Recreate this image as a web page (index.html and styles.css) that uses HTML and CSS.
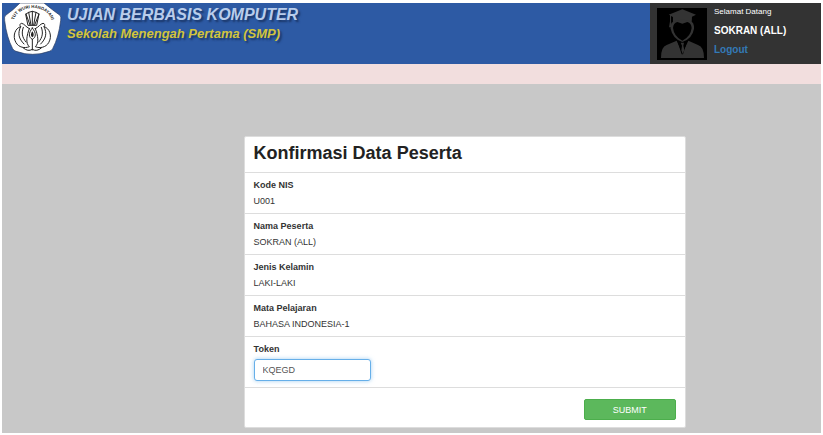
FILE: index.html
```html
<!DOCTYPE html>
<html lang="id">
<head>
  <meta charset="utf-8">
  <meta name="viewport" content="width=device-width, initial-scale=1">
  <title>Konfirmasi Data Peserta</title>
  <link rel="stylesheet" href="styles.css">
</head>
<body>
  <header class="header">
    <svg class="logo" viewBox="6 9 180 159" aria-hidden="true">
      <path d="M60 9 L132 9 Q160 32 180 46 Q184 50 182 62 Q176 112 158 146 Q155 152 148 154 Q98 172 48 154 Q42 152 38 146 Q20 112 14 62 Q12 50 17 46 Q40 30 60 9 Z" fill="#fff" stroke="#24365c" stroke-width="2"/>
      <path id="lengkung" d="M41 82 C30 5 166 5 155 82" fill="none"/>
      <text class="logo-text" text-anchor="middle"><textPath href="#lengkung" startOffset="50%">TUT WURI HANDAYANI</textPath></text>
      <g fill="none" stroke="#222" stroke-width="3" stroke-linecap="round" stroke-linejoin="round">
        <path d="M90 75 L78 42 M93 75 L86 37 M97 75 L97 34 M101 75 L108 37 M104 75 L117 42"/>
        <path d="M78 42 L86 37 L97 34 L108 37 L117 42 L110 76 L85 76 Z"/>
        <path d="M88 86 C76 80 74 72 65 70 C60 70 58 76 62 80 C46 84 36 108 48 128 C56 142 74 146 88 140 C76 130 80 106 88 86 Z"/>
        <path d="M106 86 C118 80 120 72 129 70 C134 70 136 76 132 80 C148 84 158 108 146 128 C138 142 120 146 106 140 C118 130 114 106 106 86 Z"/>
        <path d="M62 80 C52 100 56 116 72 132 M70 82 C64 98 66 112 78 126 M132 80 C142 100 138 116 122 132 M124 82 C130 98 128 112 116 126"/>
        <path d="M97 84 C84 100 86 112 97 118 C108 112 110 100 97 84 Z M97 118 L97 150 M70 144 Q84 156 97 148 Q110 156 124 144"/>
      </g>
      <path d="M97 94 C91 102 92 109 97 112 C102 109 103 102 97 94 Z" fill="#222"/>
    </svg>
    <div class="brand">
      <div class="brand-title">UJIAN BERBASIS KOMPUTER</div>
      <div class="brand-sub">Sekolah Menengah Pertama (SMP)</div>
    </div>
    <div class="user">
      <svg class="avatar" viewBox="0 0 150 156" aria-hidden="true">
        <rect width="150" height="156" fill="#000"/>
        <g fill="#333">
          <path d="M76 4 L117 20 L105 26 L104 44 Q76 29 48 44 L48 27 L42 24 L42 40 L45 58 L36 58 L39 40 L39 22 L35 20 Z"/>
          <path d="M47 42 Q76 28 105 42 Q112 48 111 62 Q106 92 76 102 Q47 92 41 62 Q40 48 47 42 Z"/>
          <path d="M12 150 Q12 116 29 111 L59 98 L76 136 L94 98 L123 111 Q141 116 141 150 Z"/>
        </g>
        <path d="M48 60 Q49 45 61 42 L76 47 L91 42 Q103 45 104 60 Q101 86 76 98 Q51 86 48 60 Z" fill="#000"/>
        <path d="M61 98 L76 105 L91 98 L78 139 L74 139 Z" fill="#000"/>
        <path d="M71 104 L81 104 L79 113 L82 126 L77 138 L73 127 L75 113 Z" fill="#333"/>
      </svg>
      <div class="user-info">
        <span>Selamat Datang</span>
        <strong>SOKRAN (ALL)</strong>
        <a href="#">Logout</a>
      </div>
    </div>
  </header>
  <div class="strip"></div>

  <main class="main">
    <form class="panel">
      <h1>Konfirmasi Data Peserta</h1>
      <dl>
        <div class="row">
          <dt>Kode NIS</dt>
          <dd>U001</dd>
        </div>
        <div class="row">
          <dt>Nama Peserta</dt>
          <dd>SOKRAN (ALL)</dd>
        </div>
        <div class="row">
          <dt>Jenis Kelamin</dt>
          <dd>LAKI-LAKI</dd>
        </div>
        <div class="row">
          <dt>Mata Pelajaran</dt>
          <dd>BAHASA INDONESIA-1</dd>
        </div>
      </dl>
      <div class="row">
        <label for="token">Token</label>
        <input type="text" id="token" value="KQEGD">
      </div>
      <div class="panel-footer">
        <button type="submit">SUBMIT</button>
      </div>
    </form>
  </main>
</body>
</html>
```

FILE: styles.css
```css
* {
  box-sizing: border-box;
}

body {
  display: flex;
  flex-direction: column;
  min-height: 100vh;
  margin: 0;
  padding: 3px 2px 2px;
  background: #fff;
  color: #333;
  font-family: "Liberation Sans", Arial, sans-serif;
  font-size: 9px;
  line-height: 16px;
}

.header {
  display: flex;
  background: #2d5aa4;
}

.logo {
  width: 60px;
  height: 53px;
}

.logo-text {
  fill: #222;
  font-size: 13px;
  font-weight: bold;
}

.brand {
  flex: 1;
  padding: 2px 0 0 5px;
  font-style: italic;
  font-weight: bold;
  text-shadow: 2px 2px 2px #1a3566;
  white-space: nowrap;
}

.brand-title {
  color: #b9cdeb;
  font-size: 16px;
  line-height: 20px;
}

.brand-sub {
  color: #d2c43c;
  font-size: 13px;
  line-height: 18px;
}

.user {
  display: flex;
  width: 171px;
  padding: 5px 7px 4px;
  background: #333;
}

.avatar {
  width: 50px;
  height: 52px;
}

.user-info {
  display: flex;
  flex-direction: column;
  padding-left: 7px;
  color: #fff;
  font-size: 8px;
  line-height: 8px;
}

.user-info strong,
.user-info a {
  font-size: 10px;
  font-weight: bold;
  line-height: 19px;
}

.user-info strong {
  padding-top: 5px;
}

.user-info a {
  color: #337ab7;
  text-decoration: none;
}

.strip {
  height: 20px;
  background: #f2dede;
}

.main {
  flex: 1;
  padding: 52px 0 5px;
  background: #c8c8c8;
}

.panel {
  width: 54%;
  margin-left: 29.5%;
  background: #fff;
  border: 1px solid #ddd;
  border-radius: 2px;
}

h1 {
  margin: 0;
  padding: 5px 9px 8px;
  color: #222;
  font-size: 18px;
  line-height: 22px;
}

dl,
dd {
  margin: 0;
}

.row {
  padding: 4px 9px;
  border-top: 1px solid #ddd;
}

dt,
label {
  display: block;
  font-weight: bold;
}

input {
  display: block;
  width: 117px;
  height: 22px;
  margin: 2px 0;
  padding: 0 8px;
  border: 1px solid #66afe9;
  border-radius: 3px;
  box-shadow: 0 0 4px rgba(102, 175, 233, .6);
  color: #555;
  font: inherit;
}

.panel-footer {
  display: flex;
  justify-content: flex-end;
  padding: 11px 9px 7px;
  border-top: 1px solid #ddd;
}

button {
  width: 92px;
  height: 21px;
  padding: 0;
  border: 1px solid #4cae4c;
  border-radius: 2px;
  background: #5cb85c;
  color: #fff;
  font: inherit;
  cursor: pointer;
}
```
